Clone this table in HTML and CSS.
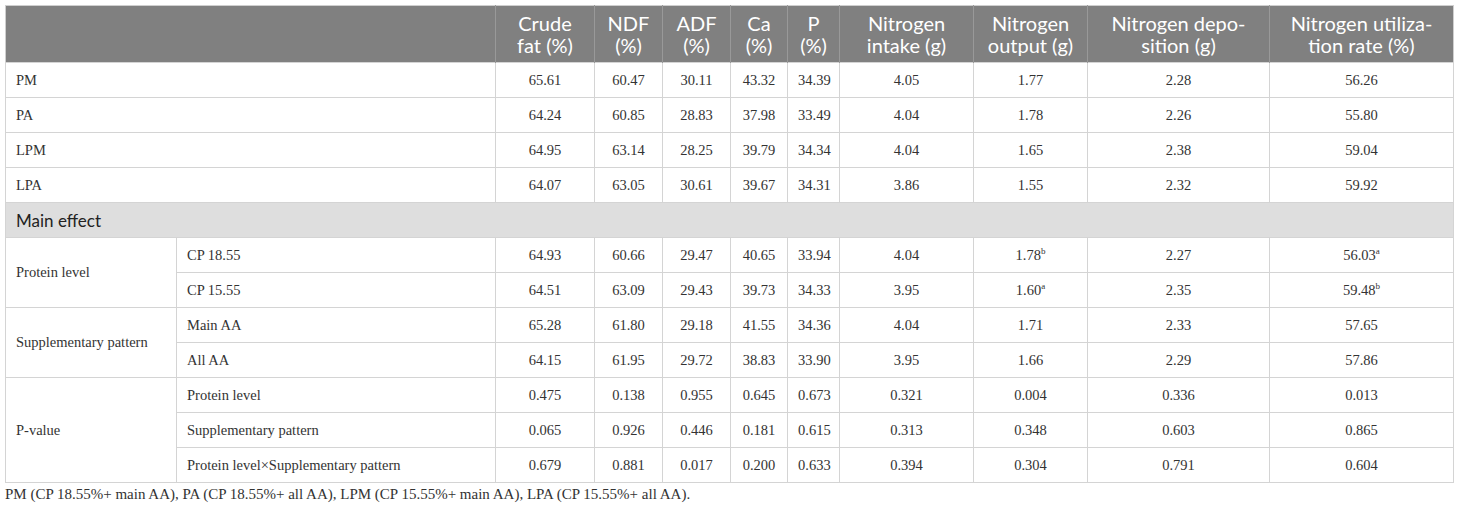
FILE: index.html
```html
<!DOCTYPE html>
<html>
  <head>
    <title>Nitrogen utilization table</title>
    <link rel="stylesheet" href="styles.css">
  </head>
  <body>
    <div class="wrap">
      <table class="data">
        <colgroup>
          <col style="width:171px"><col style="width:319px">
          <col style="width:99px"><col style="width:68px"><col style="width:68px">
          <col style="width:57px"><col style="width:52px"><col style="width:134px">
          <col style="width:114px"><col style="width:182px"><col style="width:184px">
        </colgroup>
        <thead>
          <tr>
            <th colspan="2"></th>
            <th>Crude<br>fat (%)</th>
            <th>NDF<br>(%)</th>
            <th>ADF<br>(%)</th>
            <th>Ca<br>(%)</th>
            <th>P<br>(%)</th>
            <th>Nitrogen<br>intake (g)</th>
            <th>Nitrogen<br>output (g)</th>
            <th>Nitrogen depo-<br>sition (g)</th>
            <th>Nitrogen utiliza-<br>tion rate (%)</th>
          </tr>
        </thead>
        <tbody>
          <tr><td colspan="2" class="lbl">PM</td><td>65.61</td><td>60.47</td><td>30.11</td><td>43.32</td><td>34.39</td><td>4.05</td><td>1.77</td><td>2.28</td><td>56.26</td></tr>
          <tr><td colspan="2" class="lbl">PA</td><td>64.24</td><td>60.85</td><td>28.83</td><td>37.98</td><td>33.49</td><td>4.04</td><td>1.78</td><td>2.26</td><td>55.80</td></tr>
          <tr><td colspan="2" class="lbl">LPM</td><td>64.95</td><td>63.14</td><td>28.25</td><td>39.79</td><td>34.34</td><td>4.04</td><td>1.65</td><td>2.38</td><td>59.04</td></tr>
          <tr><td colspan="2" class="lbl">LPA</td><td>64.07</td><td>63.05</td><td>30.61</td><td>39.67</td><td>34.31</td><td>3.86</td><td>1.55</td><td>2.32</td><td>59.92</td></tr>
          <tr class="section"><td colspan="11">Main effect</td></tr>
          <tr><td rowspan="2" class="lbl">Protein level</td><td class="lbl">CP 18.55</td><td>64.93</td><td>60.66</td><td>29.47</td><td>40.65</td><td>33.94</td><td>4.04</td><td>1.78<sup>b</sup></td><td>2.27</td><td>56.03<sup>a</sup></td></tr>
          <tr><td class="lbl">CP 15.55</td><td>64.51</td><td>63.09</td><td>29.43</td><td>39.73</td><td>34.33</td><td>3.95</td><td>1.60<sup>a</sup></td><td>2.35</td><td>59.48<sup>b</sup></td></tr>
          <tr><td rowspan="2" class="lbl">Supplementary pattern</td><td class="lbl">Main AA</td><td>65.28</td><td>61.80</td><td>29.18</td><td>41.55</td><td>34.36</td><td>4.04</td><td>1.71</td><td>2.33</td><td>57.65</td></tr>
          <tr><td class="lbl">All AA</td><td>64.15</td><td>61.95</td><td>29.72</td><td>38.83</td><td>33.90</td><td>3.95</td><td>1.66</td><td>2.29</td><td>57.86</td></tr>
          <tr><td rowspan="3" class="lbl">P-value</td><td class="lbl">Protein level</td><td>0.475</td><td>0.138</td><td>0.955</td><td>0.645</td><td>0.673</td><td>0.321</td><td>0.004</td><td>0.336</td><td>0.013</td></tr>
          <tr><td class="lbl">Supplementary pattern</td><td>0.065</td><td>0.926</td><td>0.446</td><td>0.181</td><td>0.615</td><td>0.313</td><td>0.348</td><td>0.603</td><td>0.865</td></tr>
          <tr><td class="lbl">Protein level×Supplementary pattern</td><td>0.679</td><td>0.881</td><td>0.017</td><td>0.200</td><td>0.633</td><td>0.394</td><td>0.304</td><td>0.791</td><td>0.604</td></tr>
        </tbody>
      </table>
      <p class="note">PM (CP 18.55%+ main AA), PA (CP 18.55%+ all AA), LPM (CP 15.55%+ main AA), LPA (CP 15.55%+ all AA).</p>
    </div>
  </body>
</html>
```

FILE: styles.css
```css
body        {margin:0; background:#fff; color:#333;
             font-family:"Liberation Serif","Times New Roman",serif;}
.wrap       {padding:5px 0 0 5px;}

/* table: fixed column widths so columns land where the original does */
.data       {border-collapse:collapse; table-layout:fixed; width:1449px;
             border:1px solid #cfcfcf;}
.data th    {background:#808080; color:#fff; font-family:Lato,"Open Sans",sans-serif;
             font-weight:400; font-size:20px; line-height:22px; height:57px;
             padding:0 2px; text-align:center; vertical-align:middle;
             border-left:1px solid #999; box-sizing:border-box; white-space:nowrap;}
.data th:first-child {border-left:none;}
.data td    {height:35px; padding:0 10px; font-size:14.5px; text-align:center;
             border:1px solid #d4d4d4; box-sizing:border-box; white-space:nowrap;}
.data td.lbl {text-align:left;}
.data sup   {font-size:9px; line-height:0; vertical-align:6px;}

.section td {background:#dedede; text-align:left; color:#222;
             font-family:Lato,"Open Sans",sans-serif; font-size:17px;}

.note       {margin:3px 0 0; font-size:15px; color:#333;}
```
